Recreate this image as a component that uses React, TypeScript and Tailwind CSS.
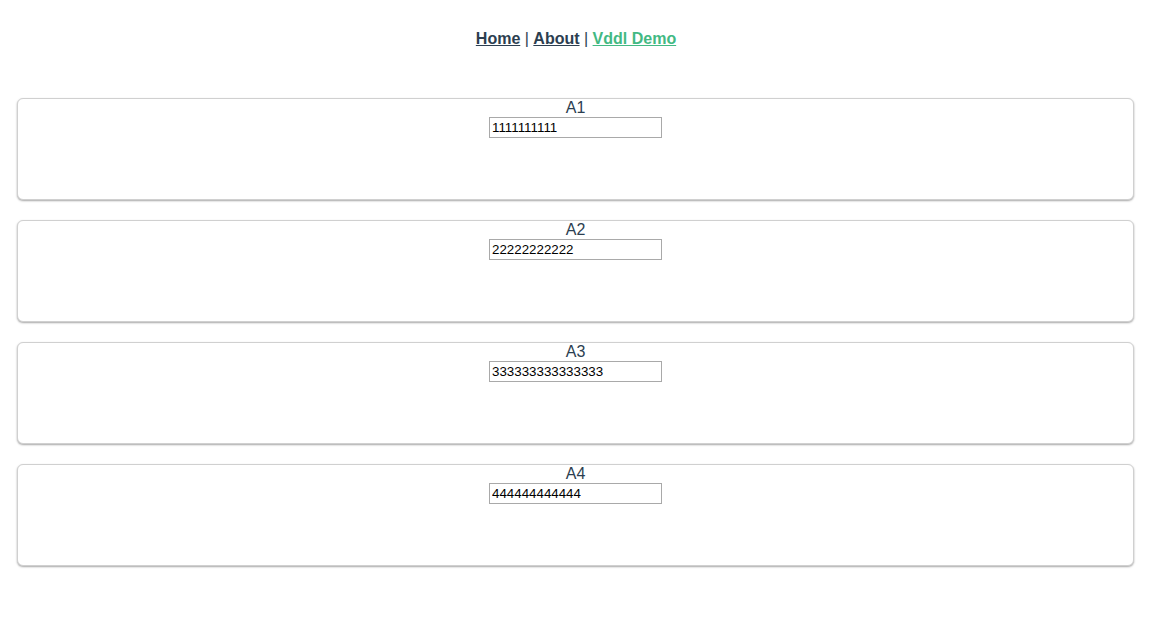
import { useState } from "react";

const initial = [
  { id: "A1", value: "1111111111" },
  { id: "A2", value: "22222222222" },
  { id: "A3", value: "333333333333333" },
  { id: "A4", value: "444444444444" },
];

export default function App() {
  const [items, setItems] = useState(initial);

  const update = (id: string, value: string) => {
    setItems((prev) => prev.map((it) => (it.id === id ? { ...it, value } : it)));
  };

  return (
    <div className="min-h-screen bg-white font-['Liberation_Sans',Arial,sans-serif] text-[#2c3e50]">
      {/* Nav */}
      <nav className="p-[30px] text-center text-base leading-[18px]">
        <a href="#" className="font-bold text-[#2c3e50] underline">
          Home
        </a>{" "}
        |{" "}
        <a href="#" className="font-bold text-[#2c3e50] underline">
          About
        </a>{" "}
        |{" "}
        <a href="#" className="font-bold text-[#42b983] underline">
          Vddl Demo
        </a>
      </nav>

      {/* Lista */}
      <div className="mt-[20px] ml-[17px] mr-[18px] flex flex-col gap-[20px]">
        {items.map((it) => (
          <div
            key={it.id}
            className="h-[102px] rounded-[6px] border border-[#d0d0d0] bg-white text-center shadow-[0_1px_2px_rgba(0,0,0,0.35)]"
          >
            <div className="text-base leading-[18px]">{it.id}</div>
            <input
              value={it.value}
              onChange={(e) => update(it.id, e.target.value)}
              className="mx-auto block h-[21px] w-[173px] border border-[#a9a9a9] px-[2px] text-[13.33px] leading-[17px] text-black outline-none"
            />
          </div>
        ))}
      </div>
    </div>
  );
}
